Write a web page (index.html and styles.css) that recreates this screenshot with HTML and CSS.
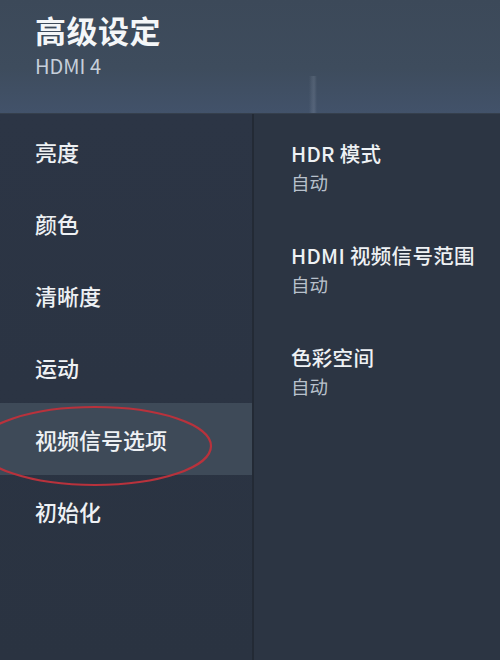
FILE: index.html
```html
<!DOCTYPE html>
<html lang="zh-CN">
<head>
<meta charset="utf-8">
<title>高级设定</title>
<link rel="stylesheet" href="styles.css">
</head>
<body>
<div class="screen">
  <header class="header">
    <h1 class="title">高级设定</h1>
    <div class="subtitle">HDMI 4</div>
  </header>
  <main class="main">
    <nav class="menu">
      <div class="menu-item">亮度</div>
      <div class="menu-item">颜色</div>
      <div class="menu-item">清晰度</div>
      <div class="menu-item">运动</div>
      <div class="menu-item active">视频信号选项
        <svg class="circle" width="240" height="100" viewBox="0 0 240 100"><ellipse cx="115" cy="48" rx="116" ry="39" fill="none" stroke="#b8323c" stroke-width="2.2"/></svg>
      </div>
      <div class="menu-item">初始化</div>
    </nav>
    <section class="options">
      <div class="option">
        <div class="option-title">HDR 模式</div>
        <div class="option-value">自动</div>
      </div>
      <div class="option">
        <div class="option-title">HDMI 视频信号范围</div>
        <div class="option-value">自动</div>
      </div>
      <div class="option">
        <div class="option-title">色彩空间</div>
        <div class="option-value">自动</div>
      </div>
    </section>
  </main>
</div>
</body>
</html>
```

FILE: styles.css
```css
html, body {
  margin: 0;
  padding: 0;
  background: #2b3442;
}
.screen {
  width: 500px;
  height: 660px;
  overflow: hidden;
  display: flex;
  flex-direction: column;
  font-family: "Noto Sans CJK SC", "Noto Sans", sans-serif;
  color: #f1f3f6;
}
.header {
  height: 114px;
  box-sizing: border-box;
  padding: 10px 0 0 35px;
  background:
    linear-gradient(90deg, rgba(255,255,255,0) 309px, rgba(200,210,225,0.10) 312px, rgba(200,210,225,0.14) 314px, rgba(255,255,255,0) 317px) 0 76px / 100% 38px no-repeat,
    linear-gradient(180deg, #3c4959 0%, #3e4c5d 60%, #42526a 100%);
  border-bottom: 1px solid #353f4c;
}
.title {
  margin: 0;
  font-size: 31px;
  line-height: 40px;
  font-weight: 700;
  letter-spacing: 0.5px;
  color: #f4f6f8;
}
.subtitle {
  margin-top: 3px;
  font-size: 20px;
  line-height: 26px;
  color: #c6cfda;
  font-weight: 400;
}
.main {
  flex: 1;
  display: flex;
  background: #2b3442;
}
.menu {
  width: 252px;
  flex: none;
  padding-top: 1px;
  border-right: 2px solid #232a35;
  background: linear-gradient(180deg, #2c3545 0%, #2a3341 100%);
}
.menu-item {
  position: relative;
  height: 72px;
  display: flex;
  align-items: center;
  padding-left: 35px;
  font-size: 22px;
  font-weight: 500;
  color: #eef1f4;
}
.menu-item.active {
  background: #3e4a58;
}
.circle {
  position: absolute;
  left: -20px;
  top: -5px;
  pointer-events: none;
}
.options {
  flex: 1;
  padding: 24px 0 0 37px;
  background: #2c3543;
}
.option {
  margin-bottom: 44px;
}
.option-title {
  font-size: 20.5px;
  line-height: 30px;
  font-weight: 500;
  color: #eef1f4;
}
.option-title {
  letter-spacing: 0.3px;
}
.option-value {
  font-size: 18.5px;
  line-height: 28px;
  color: #b8c1cc;
}
```
